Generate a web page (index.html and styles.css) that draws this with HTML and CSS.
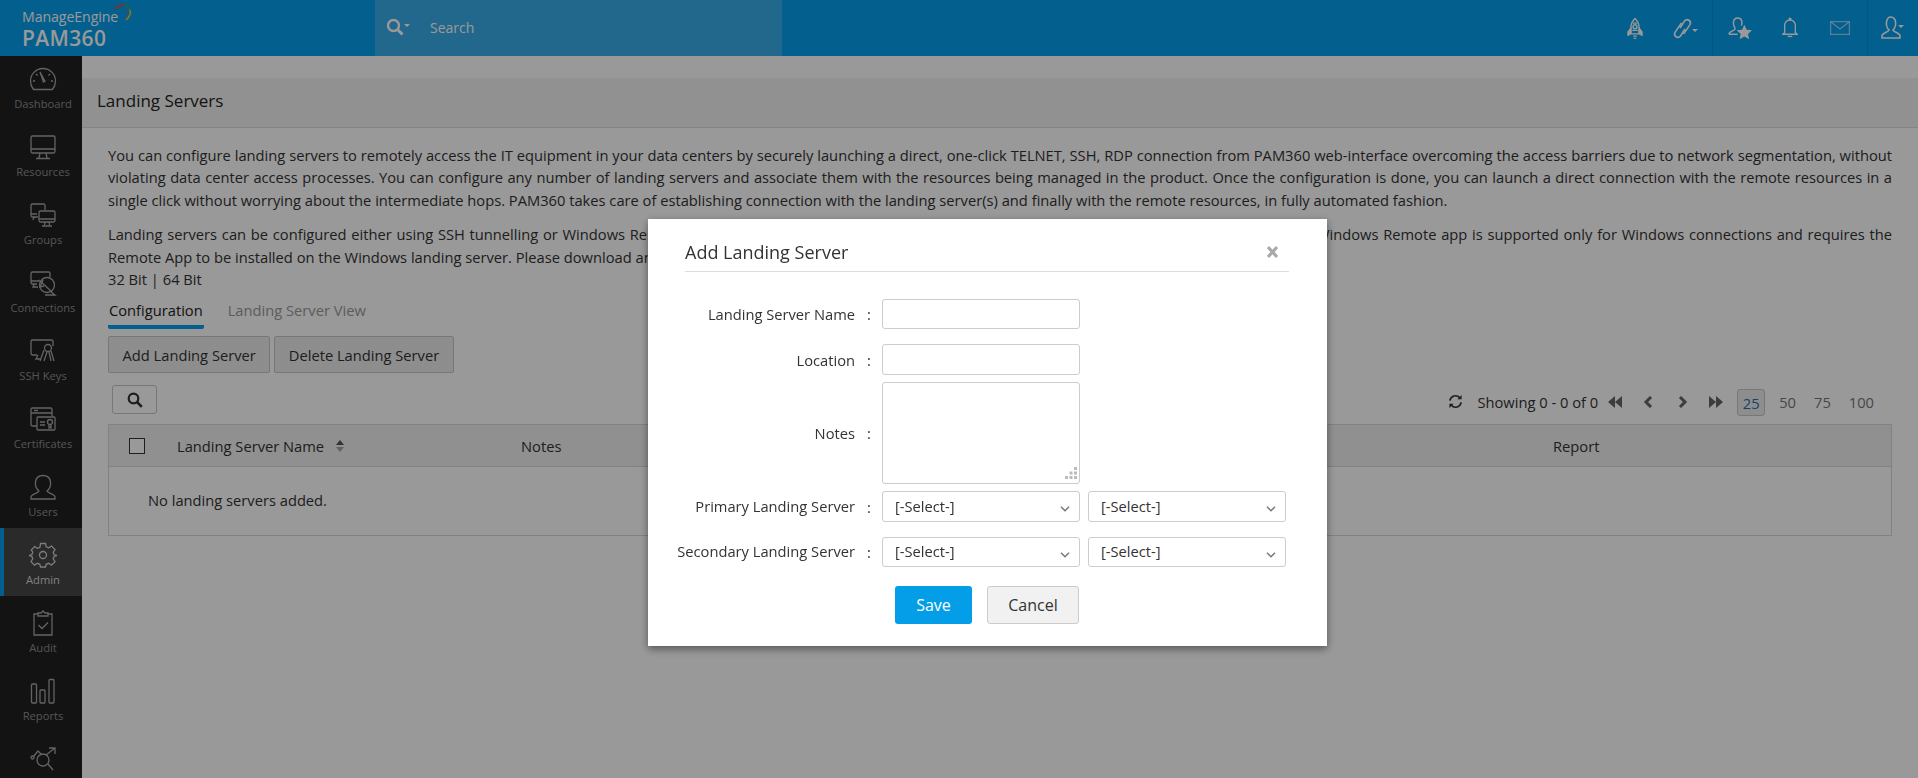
FILE: index.html
```html
<!DOCTYPE html>
<html lang="en">
<head>
<meta charset="utf-8">
<title>PAM360 - Landing Servers</title>
<link rel="stylesheet" href="styles.css">
</head>
<body>
<div class="app">
  <header class="topbar">
    <div class="brand">
      <div class="brand-me">ManageEngine</div>
      <div class="brand-pam">PAM360</div>
      <svg class="brand-arc" viewBox="0 0 20 18" width="20" height="18" fill="none" stroke-width="1.6">
        <path d="M2 6C4 2 8 1 11 1.5" stroke="#e44a3c"/>
        <path d="M11 1.5C14 2 16 3.5 17 6" stroke="#3fae5a"/>
        <path d="M17 6C18 9 16.5 13 13 16" stroke="#f0c23c"/>
        <path d="M13.5 5C15 8 14.5 11 12 14" stroke="#3a8fd0"/>
      </svg>
    </div>
    <div class="search">
      <svg class="search-icon" viewBox="0 0 24 18" width="24" height="18" fill="none" stroke="#fff">
        <circle cx="7.5" cy="7.5" r="5.5" stroke-width="2.4"/>
        <path d="M11.5 11.5l5 5" stroke-width="3"/>
        <path d="M18 6h6l-3 3z" fill="#fff" stroke="none"/>
      </svg>
      <span class="search-text">Search</span>
    </div>
    <div class="top-actions">
      <div class="top-group">
        <div class="top-cell">
          <svg viewBox="0 0 20 24" width="18" height="23" fill="none" stroke="#fff" stroke-width="1.5">
            <path d="M10 1c3 3 4.500 6 4.500 9v8h-9v-8c0-3 1.500-6 4.500-9z"/>
            <circle cx="10" cy="10" r="2.200"/>
            <path d="M5.500 11l-3.500 4.500v4.500l3.500-2zM14.500 11l3.500 4.500v4.500l-3.500-2z" fill="#fff" stroke-width="1"/>
            <path d="M7.500 6h5M7 14h6M8 20.500h4M8.500 23h3"/>
          </svg>
        </div>
        <div class="top-cell">
          <svg viewBox="0 0 26 24" width="26" height="24" fill="none" stroke="#fff" stroke-width="1.600">
            <path d="M8 12l4.500-7a3.300 3.300 0 0 1 5.500 3.600L11.500 18"/>
            <path d="M13 13l-4.500 7a3.300 3.300 0 0 1-5.500-3.600L9.500 7"/>
            <path d="M20 13h6l-3 3z" fill="#fff" stroke="none"/>
          </svg>
        </div>
      </div>
      <div class="top-group">
        <div class="top-cell">
          <svg viewBox="0 0 26 26" width="25" height="25" fill="none" stroke="#fff" stroke-width="1.5">
            <path d="M1 19c0-3 4-3 6-5 1-1 0-2-.5-3C5 8 5 2 10 2s5 5 4 8"/>
            <path d="M1 19h9"/>
            <path d="M17 9l2.400 5.200 5.600.600-4.200 3.800 1.200 5.600-5-2.900-5 2.900 1.200-5.600-4.200-3.800 5.600-.600z" fill="#fff" stroke="none"/>
          </svg>
        </div>
        <div class="top-cell">
          <svg viewBox="0 0 18 24" width="16" height="22" fill="none" stroke="#fff" stroke-width="1.5">
            <circle cx="9" cy="2" r="1"/>
            <path d="M3 17V9a6 6 0 0 1 12 0v8l2 2H1z"/>
            <path d="M6.500 21.500h5"/>
          </svg>
        </div>
        <div class="top-cell top-dim">
          <svg viewBox="0 0 20 14" width="20" height="14" fill="none" stroke="#fff" stroke-width="1.200">
            <rect x=".6" y=".6" width="18.800" height="12.800"/>
            <path d="M1 1l9 7 9-7"/>
          </svg>
        </div>
      </div>
      <div class="top-group top-group-last">
        <div class="top-cell">
          <svg viewBox="0 0 24 24" width="24" height="24" fill="none" stroke="#fff" stroke-width="1.6">
            <path d="M1 22v-2c0-3 6-3.500 7-6-2-2-3-5-2.500-8C6 3 8 1 10 1s4.500 2 4.500 5c.500 3-.500 6-2.500 8 1 2.500 7 3 7 6v2z"/>
            <path d="M17 9h6l-3 3z" fill="#fff" stroke="none"/>
          </svg>
        </div>
      </div>
    </div>
  </header>

  <div class="body">
    <nav class="sidebar">
      <div class="nav-list">
        <div class="nav-item">
          <svg class="nav-icon" viewBox="0 0 28 26" fill="none">
            <path d="M4.500 23.500C2.500 21 1.500 18 1.500 15a12.500 12.500 0 0 1 25 0c0 3-1 6-3 8.500z"/>
            <path d="M11 6l3.500 10 1.500-.8z"/>
            <path d="M4 15h2M22 15h2M7 8l1.500 1.500M21 8l-1.500 1.500"/>
          </svg>
          <span>Dashboard</span>
        </div>
        <div class="nav-item">
          <svg class="nav-icon" viewBox="0 0 28 26" fill="none">
            <rect x="2" y="2" width="24" height="17" rx="1.500"/>
            <path d="M2 15h24M11 19l-1 5M17 19l1 5M7 24.500h14"/>
          </svg>
          <span>Resources</span>
        </div>
        <div class="nav-item">
          <svg class="nav-icon" viewBox="0 0 28 26" fill="none">
            <path d="M9 15H3.500A1.500 1.500 0 0 1 2 13.500v-10A1.500 1.500 0 0 1 3.500 2h11A1.500 1.500 0 0 1 16 3.500V8"/>
            <path d="M2 12h6M5 15l-1 3"/>
            <rect x="10" y="9" width="16" height="11" rx="1.500"/>
            <path d="M10 17h16M16 20l-.5 3M20 20l.5 3M13 24h10"/>
          </svg>
          <span>Groups</span>
        </div>
        <div class="nav-item">
          <svg class="nav-icon" viewBox="0 0 28 26" fill="none">
            <path d="M8 14H3.500A1.500 1.500 0 0 1 2 12.500v-9A1.500 1.500 0 0 1 3.500 2h16A1.500 1.500 0 0 1 21 3.500V7"/>
            <path d="M2 11h8M5 14l-1 3h5"/>
            <circle cx="18" cy="15" r="7.500"/>
            <path d="M10 10l13 12M14 10l-3 7 4-1M21 21l5 4H16"/>
          </svg>
          <span>Connections</span>
        </div>
        <div class="nav-item">
          <svg class="nav-icon" viewBox="0 0 28 26" fill="none">
            <path d="M8 17H3.500A1.500 1.500 0 0 1 2 15.500v-12A1.500 1.500 0 0 1 3.500 2h19A1.500 1.500 0 0 1 24 3.500V8"/>
            <path d="M9 17l-2 4h4"/>
            <circle cx="19" cy="10" r="3.500"/>
            <path d="M15 12l-4 11M18 14l-3 9M22 13l3 10M20 14l2 9"/>
          </svg>
          <span>SSH Keys</span>
        </div>
        <div class="nav-item">
          <svg class="nav-icon" viewBox="0 0 28 26" fill="none">
            <path d="M8 20H3.500A1.500 1.500 0 0 1 2 18.500v-15A1.500 1.500 0 0 1 3.500 2h18A1.500 1.500 0 0 1 23 3.500V10"/>
            <path d="M2 7h21M5 4.500h4"/>
            <rect x="8" y="11" width="18" height="13" rx="1"/>
            <path d="M11 16h5M11 19h5"/>
            <circle cx="21" cy="16" r="2.500"/>
            <path d="M20 19v3l1-1 1 1v-3"/>
          </svg>
          <span>Certificates</span>
        </div>
        <div class="nav-item">
          <svg class="nav-icon" viewBox="0 0 28 26" fill="none">
            <path d="M2 25v-2c0-3 7-3.500 8-6-2.500-2-4-5-3.500-9C7 4 10 1.500 14 1.500S21 4 21.500 8c.5 4-1 7-3.500 9 1 2.500 8 3 8 6v2z"/>
          </svg>
          <span>Users</span>
        </div>
        <div class="nav-item nav-active">
          <svg class="nav-icon" viewBox="0 0 28 26" fill="none">
            <path d="M11.500 1.500h5l.700 3.300 2.500 1 2.800-1.800 3.500 3.500-1.800 2.800 1 2.500 3.300.700v0l-3.300.800-1 2.500 1.800 2.800-3.500 3.500-2.800-1.800-2.500 1-.700 2.700h-5l-.700-2.700-2.500-1-2.800 1.800-3.500-3.500 1.800-2.800-1-2.500-3.300-.800v-.1l3.300-.700 1-2.500L2.200 8l3.500-3.500 2.800 1.800 2.500-1z"/>
            <circle cx="14" cy="13" r="3.500"/>
          </svg>
          <span>Admin</span>
        </div>
        <div class="nav-item">
          <svg class="nav-icon" viewBox="0 0 28 26" fill="none">
            <path d="M9 4H5v21h18V4h-4"/>
            <path d="M9 6V3h3l2-2 2 2h3v3z"/>
            <path d="M9.500 15l3.500 3.500 6-6"/>
          </svg>
          <span>Audit</span>
        </div>
        <div class="nav-item">
          <svg class="nav-icon" viewBox="0 0 28 26" fill="none">
            <rect x="2.500" y="6" width="5" height="19" rx="1"/>
            <rect x="11" y="12" width="5" height="13" rx="1"/>
            <rect x="20" y="1.500" width="5" height="23.500" rx="1"/>
          </svg>
          <span>Reports</span>
        </div>
        <div class="nav-item">
          <svg class="nav-icon" viewBox="0 0 28 26" fill="none">
            <circle cx="14" cy="14" r="6"/>
            <path d="M4 11l5-6 4 4M17 9l9-7M20 2h6v6M19 18l5 6"/>
            <circle cx="3.500" cy="11.500" r="1.500"/>
          </svg>
        </div>
      </div>
    </nav>

    <main class="main">
      <h1 class="page-title">Landing Servers</h1>
      <div class="content">
        <p class="intro">You can configure landing servers to remotely access the IT equipment in your data centers by securely launching a direct, one-click TELNET, SSH, RDP connection from PAM360 web-interface overcoming the access barriers due to network segmentation, without violating data center access processes. You can configure any number of landing servers and associate them with the resources being managed in the product. Once the configuration is done, you can launch a direct connection with the remote resources in a single click without worrying about the intermediate hops. PAM360 takes care of establishing connection with the landing server(s) and finally with the remote resources, in fully automated fashion.</p>
        <p class="intro intro-tight">Landing servers can be configured either using SSH tunnelling or Windows Remote app. SSH tunnelling is fully supported for SSH, Telnet, RDP and VNC connections, whereas Windows Remote app is supported only for Windows connections and requires the Remote App to be installed on the Windows landing server. Please download and install the Remote App from here:<br>32 Bit | 64 Bit</p>

        <div class="tabs">
          <span class="tab tab-on">Configuration</span>
          <span class="tab">Landing Server View</span>
        </div>

        <div class="actions">
          <button class="btn" type="button">Add Landing Server</button>
          <button class="btn" type="button">Delete Landing Server</button>
        </div>

        <div class="toolbar">
          <button class="btn-search" type="button" aria-label="Search">
            <svg viewBox="0 0 16 16" width="16" height="16" fill="none" stroke="#333">
              <circle cx="6.500" cy="6.500" r="4.800" stroke-width="2.200"/>
              <path d="M10 10l4.800 4.800" stroke-width="2.600"/>
            </svg>
          </button>
          <div class="pager">
            <svg class="pg-refresh" viewBox="0 0 16 16" width="15" height="15" fill="none" stroke="#333" stroke-width="1.800">
              <path d="M2 7a6 6 0 0 1 10.500-3M14 9a6 6 0 0 1-10.500 3"/>
              <path d="M14.500 1v4.500H10M1.500 15v-4.500H6" fill="#333" stroke="none"/>
            </svg>
            <span class="pg-text">Showing 0 - 0 of 0</span>
            <svg class="pg-arrow pg-first" viewBox="0 0 14 12" width="14" height="12"><path d="M7 0v12L0 6zM14 0v12L7 6z"/></svg>
            <svg class="pg-arrow pg-prev" viewBox="0 0 10 12" width="10" height="12"><path d="M8 1L3 6l5 5"/></svg>
            <svg class="pg-arrow pg-next" viewBox="0 0 10 12" width="10" height="12"><path d="M2 1l5 5-5 5"/></svg>
            <svg class="pg-arrow pg-last" viewBox="0 0 14 12" width="14" height="12"><path d="M0 0v12l7-6zM7 0v12l7-6z"/></svg>
            <span class="pg-size pg-size-on">25</span>
            <span class="pg-size">50</span>
            <span class="pg-size">75</span>
            <span class="pg-size">100</span>
          </div>
        </div>

        <div class="table">
          <div class="thead">
            <span class="check"></span>
            <span class="th th-name">Landing Server Name
              <svg class="sort" viewBox="0 0 8 14" width="8" height="14"><path d="M0 6l4-5 4 5z" fill="#555"/><path d="M0 8l4 5 4-5z" fill="#a8a0a8"/></svg>
            </span>
            <span class="th th-notes">Notes</span>
            <span class="th th-report">Report</span>
          </div>
          <div class="tempty">No landing servers added.</div>
        </div>
      </div>
    </main>
  </div>
</div>

<div class="overlay"></div>

<section class="modal">
  <div class="modal-head">
    <h2 class="modal-title">Add Landing Server</h2>
    <svg class="modal-close" viewBox="0 0 11 12" width="11" height="12" fill="none" stroke="#a8a8a8" stroke-width="3"><path d="M1 1l9 10M10 1L1 11"/></svg>
  </div>
  <div class="form">
    <div class="row row-name">
      <label class="lbl">Landing Server Name</label><span class="colon">:</span>
      <input class="field" type="text">
    </div>
    <div class="row row-loc">
      <label class="lbl">Location</label><span class="colon">:</span>
      <input class="field" type="text">
    </div>
    <div class="row row-notes">
      <label class="lbl">Notes</label><span class="colon">:</span>
      <div class="area-wrap">
        <textarea class="field area"></textarea>
        <svg class="grip" viewBox="0 0 12 12" width="12" height="12" fill="#bbb"><rect x="9" y="0" width="3" height="3"/><rect x="4.500" y="4.500" width="3" height="3"/><rect x="9" y="4.500" width="3" height="3"/><rect x="0" y="9" width="3" height="3"/><rect x="4.500" y="9" width="3" height="3"/><rect x="9" y="9" width="3" height="3"/></svg>
      </div>
    </div>
    <div class="row row-primary">
      <label class="lbl">Primary Landing Server</label><span class="colon">:</span>
      <div class="select"><span>[-Select-]</span><svg viewBox="0 0 10 6" width="10" height="6" fill="none" stroke="#777" stroke-width="1.500"><path d="M1 .8l4 4 4-4"/></svg></div>
      <div class="select"><span>[-Select-]</span><svg viewBox="0 0 10 6" width="10" height="6" fill="none" stroke="#777" stroke-width="1.500"><path d="M1 .8l4 4 4-4"/></svg></div>
    </div>
    <div class="row row-secondary">
      <label class="lbl">Secondary Landing Server</label><span class="colon">:</span>
      <div class="select"><span>[-Select-]</span><svg viewBox="0 0 10 6" width="10" height="6" fill="none" stroke="#777" stroke-width="1.500"><path d="M1 .8l4 4 4-4"/></svg></div>
      <div class="select"><span>[-Select-]</span><svg viewBox="0 0 10 6" width="10" height="6" fill="none" stroke="#777" stroke-width="1.500"><path d="M1 .8l4 4 4-4"/></svg></div>
    </div>
    <div class="modal-actions">
      <button class="m-btn m-save" type="button">Save</button>
      <button class="m-btn m-cancel" type="button">Cancel</button>
    </div>
  </div>
</section>
</body>
</html>
```
FILE: styles.css
```css
* { box-sizing: border-box; }
html, body { margin: 0; height: 100%; overflow: hidden; background: #fff; }
body { font-family: "Open Sans", "Noto Sans", sans-serif; font-size: 14.7px; color: #333; }
button, input, textarea { font-family: inherit; }

.app { display: flex; flex-direction: column; height: 100vh; }

/* top bar */
.topbar { position: relative; z-index: 2; display: flex; flex: 0 0 56px; height: 56px; background: #049eed; color: #fff; }
.brand { position: relative; flex: 0 0 375px; padding: 9px 0 0 22px; }
.brand-me { font-size: 14.2px; line-height: 16px; letter-spacing: -.1px; }
.brand-pam { font-size: 21px; line-height: 26px; font-weight: 600; letter-spacing: .35px; }
.brand-arc { position: absolute; left: 113px; top: 4px; }
.search { display: flex; align-items: center; flex: 0 0 407px; padding: 0 0 2px 11px; background: #3aace9; }
.search-text { margin-left: 20px; font-size: 14px; }
.top-actions { display: flex; margin-left: auto; }
.top-group { display: flex; align-items: center; padding: 0 2px 0 0; border-right: 1px solid #0490da; }
.top-group + .top-group { padding: 0 2px; }
.top-group-last.top-group-last { flex: 0 0 50px; border-right: 0; padding: 0; }
.top-cell { display: flex; align-items: center; justify-content: center; width: 50px; height: 56px; }
.top-dim svg { opacity: .6; }

.body { display: flex; flex: 1; min-height: 0; }

/* sidebar */
.sidebar { flex: 0 0 82px; background: #212121; overflow: hidden; }
.nav-list { margin-top: -4px; }
.nav-item { display: flex; flex-direction: column; align-items: center; height: 68px; padding: 14px 0 0 4px; color: #8e8e8e; font-size: 11.2px; line-height: 16px; }
.nav-icon { width: 28px; height: 26px; margin-bottom: 4px; stroke: #a6a6a6; stroke-width: 1.300; }
.nav-active { background: #464646; border-left: 4px solid #049eed; padding-left: 0; color: #d6d6d6; }
.nav-active .nav-icon { stroke: #d0d0d0; }

/* main */
.main { flex: 1; min-width: 0; padding-top: 22px; }
.page-title { margin: 0; height: 50px; padding-left: 15px; border-bottom: 1px solid #dcdcdc; background: #f2f2f2; color: #222; font-size: 17px; font-weight: 400; line-height: 46px; }
.content { padding: 16px 26px 0; }
.intro { margin: 0 0 12px; line-height: 22.4px; color: #333; text-align: justify; }
.intro-tight { margin-bottom: 0; }

.tabs { display: flex; gap: 23px; margin-top: 9px; height: 35px; }
.tab { height: 30px; padding: 0 1px; color: #999; line-height: 23px; }
.tab-on { color: #222; border-bottom: 4px solid #049eed; border-radius: 0 0 2px 2px; }

.actions { display: flex; gap: 4px; margin-top: 2px; }
.btn { height: 37px; padding: 0 13.5px; border: 1px solid #c6c6c6; border-radius: 2px; background: repeating-conic-gradient(#f0f0f0 0 25%, #e8e8e8 0 50%) 0 0 / 2px 2px; color: #333; font-size: 14.7px; }

.toolbar { display: flex; justify-content: space-between; margin-top: 12px; padding-left: 4px; }
.btn-search { display: flex; align-items: center; justify-content: center; width: 45px; height: 29px; padding: 0; border: 1px solid #c6c6c6; border-radius: 3px; background: #fff; }
.pager { display: flex; align-items: center; height: 27px; margin-top: 4px; padding: 0 18px 2px 0; }
.pg-text { margin: 0 10px 0 14px; color: #333; }
.pg-arrow { fill: #666; }
.pg-prev, .pg-next { fill: none; stroke: #666; stroke-width: 3; }
.pg-prev { margin-left: 21px; }
.pg-next { margin-left: 25px; }
.pg-last { margin-left: 21px; margin-right: 14px; }
.pg-size { margin-left: 18px; color: #777; }
.pg-size-on { align-self: flex-start; width: 28px; height: 27px; margin: 0 -4px 0 0; border: 1px solid #c6c6c6; border-radius: 3px; background: repeating-conic-gradient(#f0f0f0 0 25%, #e8e8e8 0 50%) 0 0 / 2px 2px; color: #2a6cb0; line-height: 27px; text-align: center; }

.table { margin-top: 8px; height: 112px; border: 1px solid #d8d8d8; }
.thead { position: relative; display: flex; align-items: center; height: 42px; background: #f0f0f0; border-bottom: 1px solid #d8d8d8; color: #333; }
.check { flex: 0 0 16px; height: 16px; margin-left: 20px; border: 1px solid #333; background: #fff; }
.th { display: flex; align-items: center; white-space: nowrap; }
.th-name { flex: 0 0 344px; margin-left: 32px; }
.th-notes { flex: 0 0 1032px; }
.sort { margin-left: 12px; }
.tempty { padding: 23px 0 0 39px; line-height: 20px; }

/* overlay + modal */
.overlay { position: fixed; inset: 0; z-index: 5; background: rgba(0, 0, 0, .4); }
.modal { position: fixed; z-index: 6; left: 648px; top: 219px; width: 679px; height: 427px; padding: 0 38px 0 37px; background: #fff; box-shadow: 0 3px 8px rgba(0, 0, 0, .45); }
.modal-head { display: flex; align-items: center; justify-content: space-between; height: 53px; padding: 14px 11px 0 0; border-bottom: 1px solid #ddd; }
.modal-title { margin: 0; font-size: 18px; font-weight: 400; color: #333; }
.form { padding-top: 27px; }
.row { display: flex; align-items: center; }
.lbl { display: flex; justify-content: flex-end; flex: 0 0 170px; min-width: 0; color: #333; white-space: nowrap; }
.colon { flex: 0 0 27px; padding-left: 12px; }
.field { display: block; flex: 0 0 198px; width: 198px; height: 100%; padding: 0 8px; border: 1px solid #ccc; border-radius: 3px; background: #fff; outline: 0; }
.row-name { height: 30px; }
.row-loc { height: 31px; margin-top: 15px; }
.row-notes { height: 102px; margin-top: 7px; }
.row-primary { height: 31px; margin-top: 7px; }
.row-secondary { height: 30px; margin-top: 15px; }
.row-primary .lbl, .row-secondary .lbl { padding-bottom: 2px; }
.area-wrap { position: relative; flex: 0 0 198px; width: 198px; height: 100%; }
.area { width: 100%; resize: none; }
.grip { position: absolute; right: 3px; bottom: 5px; }
.select { display: flex; align-items: center; justify-content: space-between; flex: 0 0 198px; height: 100%; padding: 0 9px 2px 12px; border: 1px solid #ccc; border-radius: 3px; background: #fff; color: #333; }
.select + .select { margin-left: 8px; }
.select svg { margin-top: 7px; }
.modal-actions { display: flex; gap: 15px; margin-top: 19px; padding-left: 210px; }
.m-btn { height: 38px; border-radius: 3px; font-size: 16px; }
.m-save { width: 77px; border: 0; background: #049ee8; color: #fff; }
.m-cancel { width: 92px; border: 1px solid #ccc; background: #f1f1f1; color: #333; }
```
